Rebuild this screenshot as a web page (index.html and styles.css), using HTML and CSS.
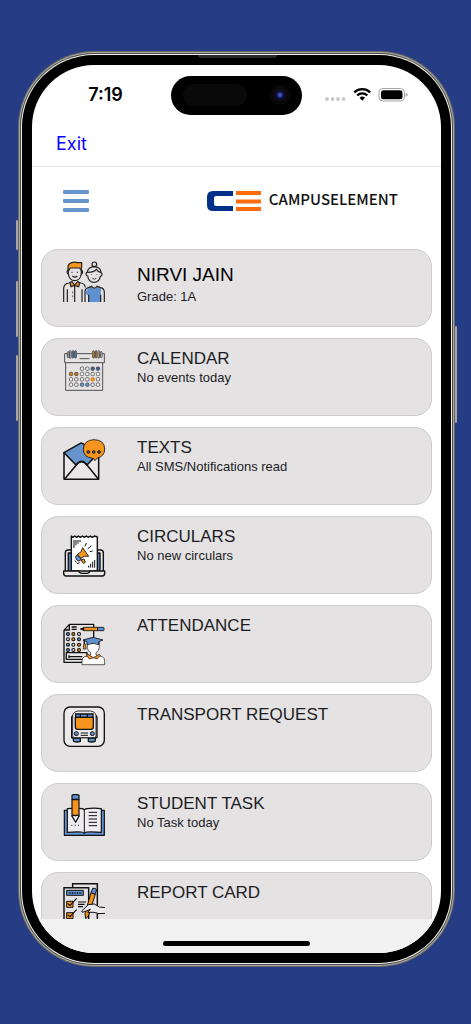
FILE: index.html
```html
<!DOCTYPE html>
<html lang="en">
<head>
<meta charset="utf-8">
<meta name="viewport" content="width=device-width, initial-scale=1">
<title>Campuselement</title>
<link rel="stylesheet" href="styles.css">
</head>
<body>
<div class="phone">
  <span class="side-button mute"></span>
  <span class="side-button volume-up"></span>
  <span class="side-button volume-down"></span>
  <span class="side-button power"></span>
  <span class="speaker"></span>
  <div class="screen">
    <div class="status">
      <time class="clock">7:19</time>
      <div class="island"><span class="sensor"></span><span class="camera"></span></div>
      <svg class="indicators" viewBox="0 0 84 16" aria-hidden="true">
        <g fill="#c9c9cb"><circle cx="3" cy="12" r="1.9"/><circle cx="8.500" cy="12" r="1.900"/><circle cx="14" cy="12" r="1.900"/><circle cx="19.500" cy="12" r="1.900"/></g>
        <g fill="none" stroke="#000" stroke-width="2.200"><path d="M30.300 5.400a11.500 11.500 0 0 1 15.900 0"/><path d="M33.200 8.500a7.200 7.200 0 0 1 10.100 0"/></g>
        <path d="M35.500 10.800a4 4 0 0 1 5.500 0l-2.750 2.900z"/>
        <rect x="55" y="1.500" width="25.500" height="12.500" rx="4" fill="none" stroke="#a4a4a4"/>
        <rect x="57" y="3.300" width="21.500" height="9" rx="2.500"/>
        <path d="M81.700 5.800q2 .6 2 2t-2 2z" fill="#a4a4a4"/>
      </svg>
    </div>
    <nav class="exit-bar"><a class="exit" href="#">Exit</a></nav>
    <header class="header">
      <button class="menu" type="button" aria-label="Menu"><span></span><span></span><span></span></button>
      <div class="brand">
        <svg class="logo" viewBox="0 0 54 20" aria-hidden="true">
          <path fill="#003087" d="M26 0H6Q0 0 0 6v8q0 6 6 6h20v-5H9q-2 0-2-2V7q0-2 2-2h17z"/>
          <path fill="#ff6a0c" d="M29 0h25v4H29zM29 8.500h25v4H29zM29 16h25v4H29z"/>
        </svg>
        <span class="brand-name">CAMPUSELEMENT</span>
      </div>
    </header>
    <main class="cards">
      <a class="card profile" href="#">
        <svg class="icon" viewBox="66 45 132 132" fill="none" stroke="#222" stroke-width="3.600" aria-hidden="true">
          <path d="M85 73v14q3 20 19 20t20-20V73"/>
          <path d="M85 76q-4 0-4 5t5 7M124 76q4 0 4 5t-5 7"/>
          <path fill="#f7931e" d="M84 75V63q2-7 11-10 9-3 17 0h13v12l-2 10-4-6H93q-5 0-5 6z"/>
          <path d="M96 80v3M112 80v3M97 93q8 7 15 0"/>
          <path d="M71 171v-42q1-13 16-15l9-3M112 111l10 3q12 1 14 13M82 171v-38M104 123v48M126 133v38"/>
          <path fill="#f7931e" d="m91 112 5-2 8 10 9-10 6 3-3 12-12-4-11 4q-3-9-2-13z"/>
          <path d="M98 139v6M98 151v6" stroke-width="2"/>
          <circle cx="163" cy="58" r="7"/>
          <path d="M143 93q-5-1-5-6t4-5V81q2-15 21-16 18 1 20 16v2q4 1 3 6t-5 5q-3 18-19 18t-19-19zM144 82q18 0 25-9 4 8 13 9"/>
          <path d="M154 88v2M171 88v2M157 100q6 5 12 0" stroke-width="2.500"/>
          <path fill="#5f91d0" stroke="none" d="m146 129 8-3q9 11 19 0l10 4-1 41h-36l-2-20q-5 0-7-7 2-11 9-15z"/>
          <path d="M135 171v-32q0-9 12-12l8-3q8 11 16 0l11 4q10 2 11 13v30M146 149v22M182 149v22"/>
        </svg>
        <div class="copy"><h2>NIRVI JAIN</h2><p>Grade: 1A</p></div>
      </a>
      <a class="card" href="#">
        <svg class="icon" viewBox="66 42 132 132" fill="none" stroke="#444" stroke-width="2.800" aria-hidden="true">
          <path d="M82 56h-8v27h119V56h-7M110 56h46"/>
          <path d="M77 84v82h111V84M119 71h29"/>
          <rect x="82" y="50" width="5" height="18" rx="2.500"/><rect x="88" y="47" width="5" height="23" rx="2.500"/>
          <rect x="96" y="47" width="5" height="22" rx="2.500" fill="#5f91d0"/><rect x="104" y="47" width="5" height="22" rx="2.500" fill="#5f91d0"/>
          <rect x="158" y="47" width="5" height="22" rx="2.500" fill="#f7931e"/><rect x="166" y="47" width="5" height="22" rx="2.500" fill="#f7931e"/>
          <rect x="174" y="47" width="5" height="22" rx="2.500"/><rect x="181" y="50" width="5" height="18" rx="2.500"/>
          <g stroke-width="2.200" fill="#f4f3f4">
            <rect x="121" y="96" width="10" height="10" rx="3"/><rect x="137" y="96" width="10" height="10" rx="3"/>
            <g fill="#39639e"><rect x="153" y="96" width="10" height="10" rx="3"/><rect x="169" y="96" width="10" height="10" rx="3"/></g>
            <g fill="#c97814"><rect x="88" y="112" width="10" height="10" rx="3"/><rect x="104" y="112" width="10" height="10" rx="3"/></g>
            <rect x="121" y="112" width="10" height="10" rx="3"/><rect x="137" y="112" width="10" height="10" rx="3"/><rect x="153" y="112" width="10" height="10" rx="3"/><rect x="169" y="112" width="10" height="10" rx="3"/>
            <rect x="88" y="128" width="10" height="10" rx="3"/><rect x="104" y="128" width="10" height="10" rx="3"/><rect x="121" y="128" width="10" height="10" rx="3"/><rect x="137" y="128" width="10" height="10" rx="3"/><rect x="153" y="128" width="10" height="10" rx="3" fill="#f7931e" stroke="#c97814"/><rect x="169" y="128" width="10" height="10" rx="3"/>
            <rect x="88" y="144" width="10" height="10" rx="3"/><rect x="104" y="144" width="10" height="10" rx="3"/><g fill="#5f91d0"><rect x="121" y="144" width="10" height="10" rx="3"/><rect x="137" y="144" width="10" height="10" rx="3"/></g><rect x="153" y="144" width="10" height="10" rx="3"/><rect x="169" y="144" width="10" height="10" rx="3"/>
          </g>
        </svg>
        <div class="copy"><h2>CALENDAR</h2><p>No events today</p></div>
      </a>
      <a class="card" href="#">
        <svg class="icon" viewBox="66 39 132 132" fill="none" stroke="#111" stroke-width="4.600" stroke-linejoin="round" aria-hidden="true">
          <path fill="#e9e7e8" d="M72 82v81h104V82"/>
          <path fill="#6794cd" d="m72 83 49-28q3-2 6 0l49 28-35 37q-8-10-16-10-9 0-17 10z"/>
          <path d="m74 162 35-42q8-11 16-11t16 11l34 42"/>
          <path fill="#f7941d" stroke-width="2.500" d="M162 44q32 1 32 28 0 22-22 27l-7 8q-1-6-7-7-28-3-28-27 1-28 32-29z"/>
          <g fill="#59657d" stroke-width="3"><circle cx="145" cy="81" r="4"/><circle cx="161" cy="81" r="4"/><circle cx="177" cy="81" r="4"/></g>
        </svg>
        <div class="copy"><h2>TEXTS</h2><p>All SMS/Notifications read</p></div>
      </a>
      <a class="card low-icon" href="#">
        <svg class="icon" viewBox="66 57 132 132" fill="none" stroke="#111" stroke-width="4.200" stroke-linejoin="round" aria-hidden="true">
          <path fill="#e9e7e8" d="M76 168v-54q0-9 8-9h98q8 0 8 9v54"/>
          <path fill="#5585c2" d="M85 168v-54h95v54"/>
          <path fill="#fff" d="M94 168V63l5 4 5-4 6 4 5-4 6 4 6-4 6 4 6-4 6 4 6-4 6 4 6-4 9 3v102z"/>
          <path fill="#e9e7e8" d="M71 168h45q2 7 8 7h18q6 0 8-7h44v7q0 8-7 8H78q-7 0-7-8z"/>
          <path stroke-width="3" d="M102 75v24M108 75v16M114 75v11M120 75v6M146 158v-6M152 158v-12M158 158v-18M164 158v-23"/>
          <path fill="#f7941d" stroke-width="2.600" d="m128 98 18 26q-12-4-24 6l-10-12q14-5 16-20z"/>
          <path fill="#f7941d" stroke-width="2.600" d="m123 135 9-3 4 10-6 3z"/>
          <path fill="#5f91d0" stroke-width="2.600" d="m107 124 6-4 10 12-4 6q-12 0-12-14z"/>
          <path stroke-width="3" d="m135 94 4-10M143 102l11-10M149 110l9-2M104 137l6 5M111 146l8-3"/>
        </svg>
        <div class="copy"><h2>CIRCULARS</h2><p>No new circulars</p></div>
      </a>
      <a class="card low-icon" href="#">
        <svg class="icon" viewBox="66 54 132 132" fill="none" stroke="#111" stroke-width="4" stroke-linejoin="round" aria-hidden="true">
          <path d="M88 58h73v38M88 58 72 76v96h54M88 58v17H72M95 66h15M95 73h15"/>
          <path fill="#e9e7e8" d="M79 143h62v20H79zM89 155h38M87 151v8"/>
          <g stroke-width="3.200">
            <g fill="#5f91d0"><circle cx="84" cy="87" r="4.500"/><circle cx="117" cy="103" r="4.500"/><circle cx="84" cy="119" r="4.500"/><circle cx="84" cy="135" r="4.500"/></g>
            <g fill="#f7941d"><circle cx="100" cy="87" r="4.500"/><circle cx="100" cy="103" r="4.500"/><circle cx="117" cy="119" r="4.500"/><circle cx="117" cy="135" r="4.500"/></g>
            <g><circle cx="117" cy="87" r="4.500"/><circle cx="84" cy="103" r="4.500"/><circle cx="100" cy="119" r="4.500"/><circle cx="100" cy="135" r="4.500"/></g>
          </g>
          <path fill="#f7941d" stroke-width="2.600" d="m121 72 12-5h40v10h-40z"/><path fill="#5f91d0" stroke-width="2.600" d="M173 67h18q3 5 0 10h-18z"/><path d="m121 72 12-5v10z" fill="#111" stroke="none"/>
          <path fill="#fff" stroke-width="2" d="M142 112v18q3 10 10 13v7l-20 6q-6 3-6 14v9h68v-9q0-12-7-15l-19-5v-7q9-5 10-16v-16z"/>
          <path fill="#f7941d" stroke-width="2" d="m144 148 16 10 18-10 3 3-10 11-11-4-12 4-8-10z"/>
          <path fill="#5f91d0" stroke-width="2.600" d="m129 105 30-8 30 8-13 5v9q-15-8-35 0v-9z"/>
          <path d="M133 106v11"/><path fill="#f7941d" stroke-width="2" d="M131 117h5l2 15h-8z"/>
        </svg>
        <div class="copy"><h2>ATTENDANCE</h2></div>
      </a>
      <a class="card" href="#">
        <svg class="icon" viewBox="66 30 132 132" fill="none" stroke="#111" stroke-width="4" aria-hidden="true">
          <rect x="72" y="36" width="121" height="118" rx="18" fill="#eceaeb"/>
          <path fill="#5f91d0" d="M99 129h22v10q-11 4-20 0zM145 129h22l-2 10q-10 4-20 0z"/>
          <path d="M101 61q-6 1-6 8v59h76V69q0-7-6-8"/>
          <path fill="#eceaeb" stroke-width="2.500" d="M98 122V62q1-12 17-14h36q16 2 17 14v60q0 6-5 6h-60q-5 0-5-6z"/>
          <path fill="#5f91d0" d="M107 67V57h52v10zM121 57v10M142 57v10"/>
          <path fill="#f7941d" d="M106 67h54v29q0 7-8 7h-39q-7 0-7-7z"/>
          <g fill="#5f91d0" stroke-width="3"><circle cx="109" cy="116" r="6"/><circle cx="157" cy="116" r="6"/></g>
          <path d="M122 114h22M122 121h22" stroke-width="3"/>
        </svg>
        <div class="copy"><h2>TRANSPORT REQUEST</h2></div>
      </a>
      <a class="card" href="#">
        <svg class="icon" viewBox="66 33 132 132" fill="none" stroke="#111" stroke-width="3.600" stroke-linejoin="round" aria-hidden="true">
          <path fill="#5f91d0" d="M73 82h120v75H73z"/>
          <path fill="#eeecee" d="M82 148V77q27-3 44 0 5 1 7 4 2-3 7-4 22-3 44 0v71q-24-2-44-1-5 1-7 4-3-4-8-4-20-1-43 1z"/>
          <path d="M133 81v68M146 88h25M146 98h25M146 108h25M146 118h25M146 128h25" stroke-width="3"/>
          <path stroke-width="3" d="M94 127h3M104 127h3M114 127h3"/>
          <path fill="#f7941d" d="M96 50h21v49l-10 18-11-18z"/><path fill="#5f91d0" d="M96 49V37q10-6 21 0v12z"/>
          <path fill="#fff" d="M96 99q6-5 10 0 5-5 11 0l-10 18z"/>
        </svg>
        <div class="copy"><h2>STUDENT TASK</h2><p>No Task today</p></div>
      </a>
      <a class="card" href="#">
        <svg class="icon" viewBox="156 54 132 132" fill="none" stroke="#111" stroke-width="4.400" aria-hidden="true">
          <path d="M188 67V56h74v125M162 68h74v118h-74z"/>
          <path fill="#5f91d0" stroke-width="3" d="M170 76h50v15h-50z"/><path d="M176 84h39" stroke-width="4" stroke-dasharray="3 2"/>
          <g fill="#f7941d" stroke-width="3"><path d="M170 109h19v18h-19zM170 143h19v18h-19z"/></g>
          <path stroke-width="3.500" d="m173 115 7 6 20-21M173 149l7 6 20-21M204 111h24M204 118h20M204 125h15"/>
          <path fill="#f7941d" stroke-width="3" d="m243 83 13 5-21 65-8 8-2-15z"/>
          <path fill="#5f91d0" stroke-width="3" d="m243 83 5-13q8-2 12 4l-5 14z"/>
          <path fill="#eceaeb" stroke-width="3" d="m285 128-17-2-15-9-18 2-20 19 2 4 14-5 10-4-8 9h19l15 4 18-1"/>
        </svg>
        <div class="copy"><h2>REPORT CARD</h2></div>
      </a>
    </main>
    <footer class="home-bar"><span class="home-indicator"></span></footer>
  </div>
</div>
</body>
</html>
```
FILE: styles.css
```css
* { box-sizing: border-box; }

body {
  margin: 0;
  height: 100vh;
  padding: 55px 20px 61px 22px;
  background: #263d85;
  color: #1c1d23;
  font-family: "Liberation Sans", Arial, sans-serif;
}

.phone {
  position: relative;
  height: 100%;
  padding: 10px;
  border-radius: 72px;
  background: #000;
  box-shadow: 0 0 0 1px #f0f0ea, 0 0 0 2px #4b4b48, 0 0 0 3px #aaa9a3, 0 0 0 4px #686763;
}

.side-button {
  position: absolute;
  left: -6px;
  width: 2px;
  border-radius: 2px;
  background: #a7a69f;
}
.mute { top: 165px; height: 30px; }
.volume-up { top: 226px; height: 56px; }
.volume-down { top: 300px; height: 66px; }
.power { top: 271px; right: -6px; left: auto; height: 97px; }

.speaker {
  position: absolute;
  top: 0;
  left: 41%;
  width: 79px;
  height: 3px;
  border-radius: 0 0 3px 3px;
  background: #2a2a2a;
}

.screen {
  display: flex;
  flex-direction: column;
  height: 100%;
  overflow: hidden;
  border-radius: 62px;
  background: #fff;
}

.status {
  display: grid;
  grid-template-columns: 1fr 131px 1fr;
  align-items: center;
  flex: none;
  height: 60px;
}
.clock {
  padding-left: 8px;
  text-align: center;
  font: 600 18px/24px Inter, sans-serif;
  color: #000;
}
.island {
  display: flex;
  align-items: center;
  justify-content: space-between;
  height: 39px;
  padding: 0 12px;
  border-radius: 20px;
  background: #000;
}
.sensor {
  width: 64px;
  height: 22px;
  border-radius: 11px;
  background: #090909;
}
.camera {
  width: 20px;
  height: 20px;
  border-radius: 50%;
  background: radial-gradient(circle, #4b55c4 0 1px, #12184e 3px, #0b0c1e 5px, #0a080a 6px);
}
.indicators {
  justify-self: center;
  width: 84px;
  height: 16px;
  margin-right: 12px;
}

.exit-bar {
  display: flex;
  align-items: center;
  flex: none;
  height: 42px;
  padding: 0 24px 4px;
  border-bottom: 1px solid #e3e3e3;
}
.exit {
  color: #0b00ff;
  font: 400 18px/24px Inter, sans-serif;
  text-decoration: none;
}

.header {
  display: flex;
  align-items: center;
  justify-content: space-between;
  flex: none;
  height: 82px;
  padding: 0 43px 14px 31px;
}
.menu {
  display: flex;
  flex-direction: column;
  gap: 5px;
  width: 26px;
  padding: 0;
  border: 0;
  background: none;
}
.menu span {
  width: 100%;
  height: 4px;
  border-radius: 1px;
  background: #6794cd;
}
.brand {
  display: flex;
  align-items: center;
  gap: 8px;
}
.logo {
  width: 54px;
  height: 20px;
}
.brand-name {
  padding-bottom: 4px;
  color: #111;
  font: 500 15px/20px "Noto Sans CJK SC", sans-serif;
}

.cards {
  display: flex;
  flex: 1;
  flex-direction: column;
  gap: 11px;
  min-height: 0;
  overflow: hidden;
  padding: 0 9px;
}
.card {
  display: flex;
  flex: none;
  align-items: flex-start;
  gap: 31px;
  min-height: 78px;
  padding: 10px 20px;
  border: 1px solid #cbcccd;
  border-radius: 17px;
  background: #e4e2e3;
  color: inherit;
  text-decoration: none;
}
.icon {
  flex: none;
  width: 44px;
  height: 44px;
}
.low-icon .icon { margin-top: 7px; }
.card h2 {
  margin: 0;
  font-size: 17px;
  font-weight: 400;
  line-height: 20px;
}
.card p {
  margin: 0;
  font-size: 13px;
  line-height: 18px;
}
.profile .copy { padding-top: 4px; }
.profile h2 {
  color: #000;
  font-size: 19px;
  line-height: 22px;
}
.profile p { line-height: 22px; }

.home-bar {
  display: flex;
  align-items: flex-end;
  justify-content: center;
  flex: none;
  height: 34px;
  padding-bottom: 7px;
  background: #f1f1f1;
}
.home-indicator {
  width: 36%;
  height: 5px;
  border-radius: 3px;
  background: #000;
}
```
